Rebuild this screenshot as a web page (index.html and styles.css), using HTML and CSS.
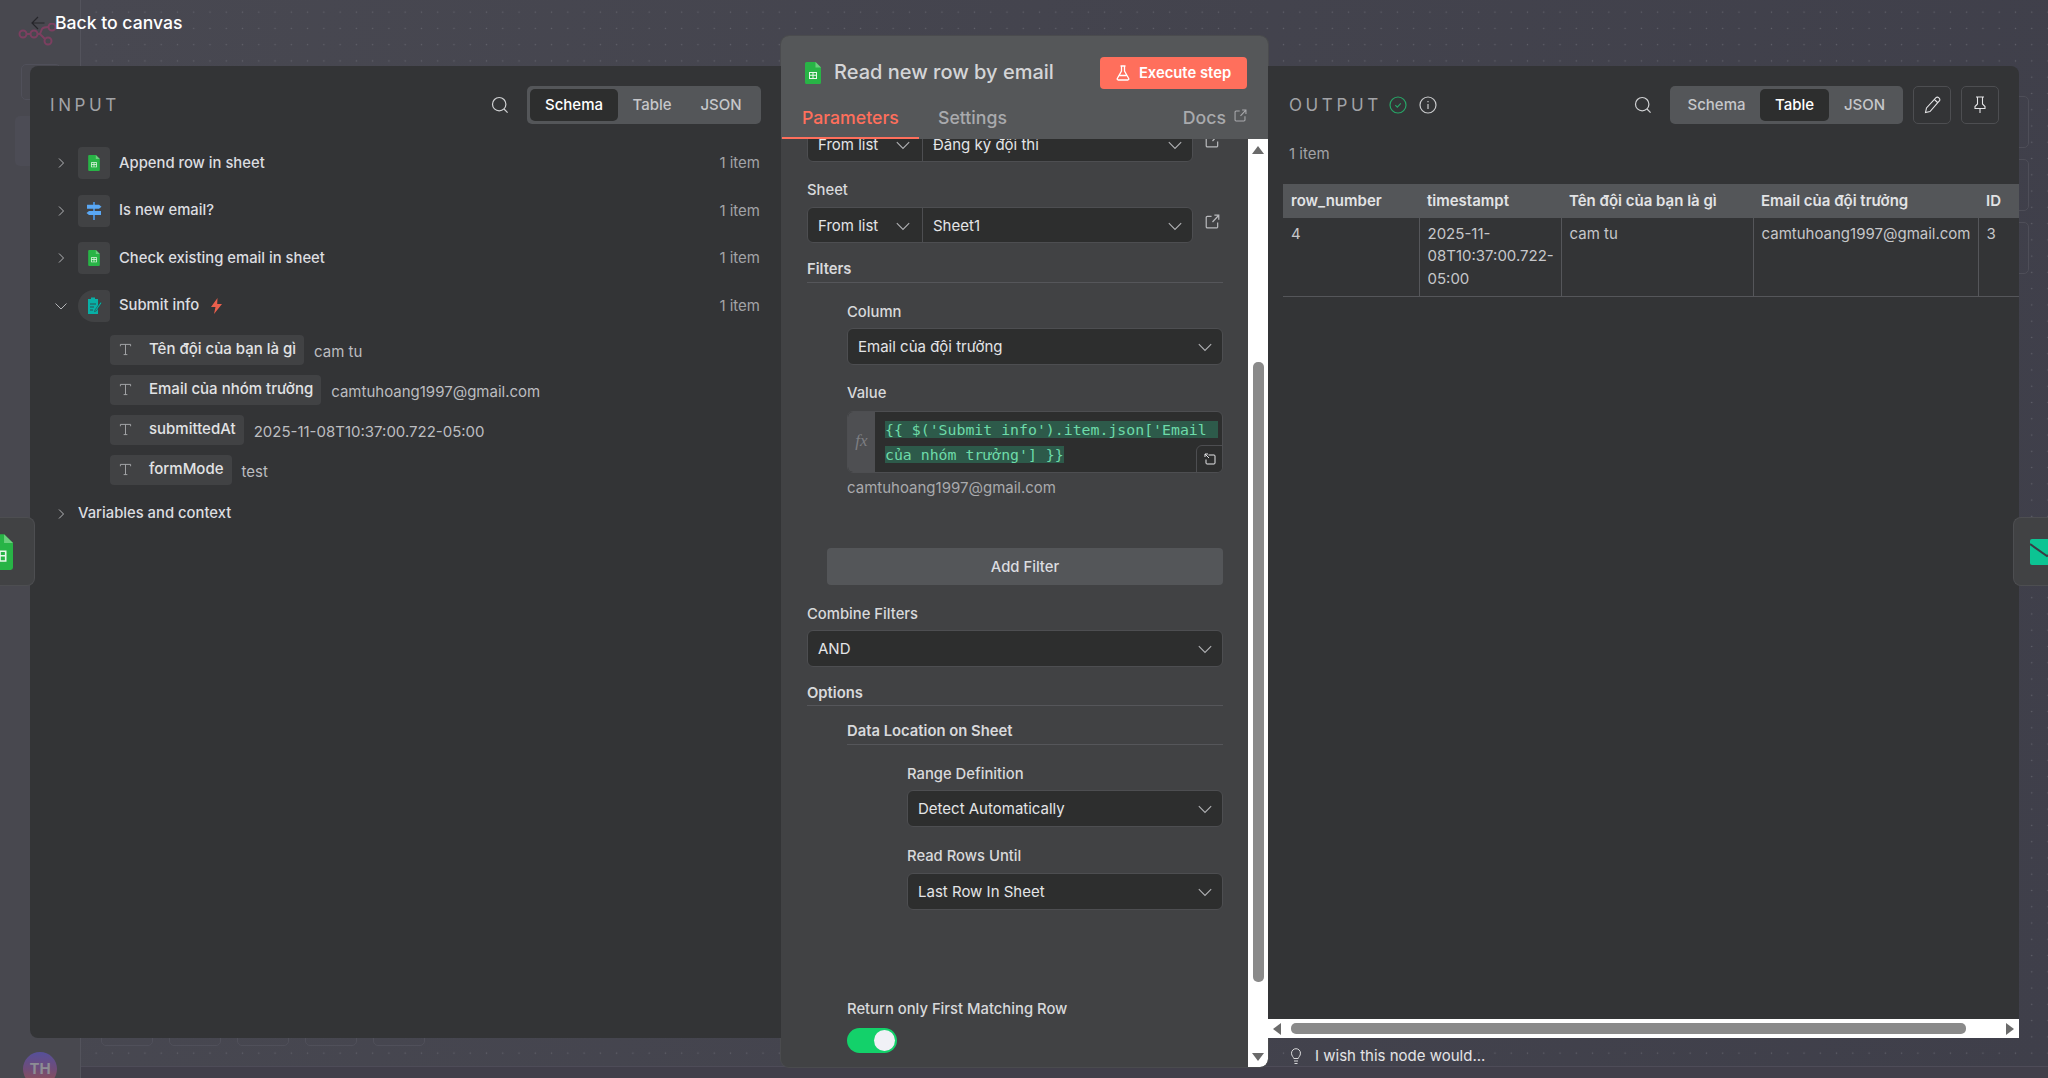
FILE: index.html
```html
<!DOCTYPE html>
<html lang="vi">
<head>
<meta charset="utf-8">
<title>Read new row by email</title>
<link rel="stylesheet" href="styles.css">
</head>
<body>
<svg class="defs" width="0" height="0">
  <symbol id="chev-r" viewBox="0 0 16 16"><path d="M6 3.500 10.500 8 6 12.500" fill="none" stroke="currentColor" stroke-width="1"/></symbol>
  <symbol id="chev-d" viewBox="0 0 16 16"><path d="M2.500 5.500 8 11l5.500-5.500" fill="none" stroke="currentColor" stroke-width="1"/></symbol>
  <symbol id="search" viewBox="0 0 20 20"><circle cx="9.200" cy="9.200" r="6.700" fill="none" stroke="currentColor" stroke-width="1.200"/><path d="m14 14 3.600 3.600" fill="none" stroke="currentColor" stroke-width="1.200"/></symbol>
  <symbol id="sheets" viewBox="0 0 16 22"><path d="M1.500 0H10.500L16 5.500V20.500A1.500 1.500 0 0 1 14.500 22H1.500A1.500 1.500 0 0 1 0 20.500V1.500A1.500 1.500 0 0 1 1.500 0Z" fill="#28b446"/><path d="M10.500 0 16 5.500H10.500Z" fill="#6ace7c"/><path d="M4 10h8v7H4Zm1 1v1.800h2.500V11Zm3.500 0v1.800H11V11ZM5 13.800v2.200h2.500v-2.200Zm3.500 0v2.200H11v-2.200Z" fill="#e8f8ea" fill-rule="evenodd"/></symbol>
  <symbol id="ext" viewBox="0 0 16 16"><path d="M7 2.500H2.500A1.200 1.200 0 0 0 1.300 3.700v9.800a1.200 1.200 0 0 0 1.200 1.200h9.800a1.200 1.200 0 0 0 1.200-1.200V9M8 8.500 14.700 1.300M10 1.300h4.700V6" fill="none" stroke="currentColor" stroke-width="1.300"/></symbol>
  <symbol id="type" viewBox="0 0 14 14"><path d="M1.500 3.500V1.500h11v2M7 1.500v11M5 12.500h4" fill="none" stroke="currentColor" stroke-width="1"/></symbol>
</svg>

<div class="app">
  <aside class="rail">
    <svg class="logo" width="40" height="24" viewBox="0 0 40 24" fill="none" stroke="#7c3f60" stroke-width="2"><circle cx="5" cy="11" r="3.500"/><circle cx="16" cy="11" r="3.500"/><circle cx="30" cy="18" r="3.500"/><circle cx="34" cy="4" r="3.500"/><path d="M8.500 11H12.500M19.500 11H22L27 16M22 11 24 6Q25.500 4 30.500 4"/></svg>
    <div class="rail-btn"></div>
    <div class="rail-fill"></div>
    <div class="avatar">TH</div>
  </aside>
  <div class="canvas">
    <div class="ghost-row">
      <div class="ghost-node"></div><div class="ghost-node"></div><div class="ghost-node"></div><div class="ghost-node"></div><div class="ghost-node"></div>
    </div>
    <div class="ghost-col">
      <div class="ghost-card"></div><div class="ghost-card"></div><div class="ghost-card"></div>
    </div>
  </div>

  <a class="back">
    <svg class="back-arrow" width="18" height="18" viewBox="0 0 18 18" fill="none" stroke="#26262b" stroke-width="1.200"><path d="M15.500 9H3M9 3 3 9l6 6"/></svg>
    <span>Back to canvas</span>
  </a>

  <div class="node-tab node-tab-left">
    <svg class="tab-sheet" width="26" height="36"><use href="#sheets"/></svg>
  </div>
  <div class="node-tab node-tab-right">
    <svg class="tab-mail" width="32" height="26" viewBox="0 0 32 26"><rect width="32" height="26" rx="2" fill="#0cc493"/><path d="M0 5 17 17 32 8" fill="none" stroke="#3a3b44" stroke-width="2"/></svg>
  </div>

  <main class="modal">
    <section class="panel panel-input">
      <header class="panel-head">
        <h2 class="panel-title">INPUT</h2>
        <div class="head-tools">
          <svg class="ico-search" width="20" height="20"><use href="#search"/></svg>
          <div class="switch switch-input">
            <span class="sw sw-on sw-schema">Schema</span><span class="sw sw-table">Table</span><span class="sw sw-json">JSON</span>
          </div>
        </div>
      </header>
      <div class="tree">
        <div class="node-row">
          <svg class="chev" width="16" height="16"><use href="#chev-r"/></svg>
          <span class="node-ico"><svg width="12" height="16"><use href="#sheets"/></svg></span>
          <span class="node-name">Append row in sheet</span><span class="count">1 item</span>
        </div>
        <div class="node-row">
          <svg class="chev" width="16" height="16"><use href="#chev-r"/></svg>
          <span class="node-ico"><svg width="16" height="18" viewBox="0 0 16 18"><path d="M7.200 0h1.600v18H7.200Z" fill="#4a9cf0"/><path d="M1 2.800h12l2.500 2-2.500 2H1Z" fill="#5aa8f5"/><path d="M15 9H3L.5 11 3 13h12Z" fill="#5aa8f5"/></svg></span>
          <span class="node-name">Is new email?</span><span class="count">1 item</span>
        </div>
        <div class="node-row">
          <svg class="chev" width="16" height="16"><use href="#chev-r"/></svg>
          <span class="node-ico"><svg width="12" height="16"><use href="#sheets"/></svg></span>
          <span class="node-name">Check existing email in sheet</span><span class="count">1 item</span>
        </div>
        <div class="node-row">
          <svg class="chev" width="16" height="16"><use href="#chev-d"/></svg>
          <span class="node-ico node-ico-trigger"><svg width="15" height="17" viewBox="0 0 15 17"><path d="M1 2h3V.5h4V2h3v15H1Z" fill="#08b0a6"/><path d="M3 7h6M3 10h4M3 13h3" stroke="#2f4f52" stroke-width="1.200"/><path d="m8 13 5.500-8 1.300 1-5.500 8-1.800.6Z" fill="#08b0a6" stroke="#333436" stroke-width=".5"/></svg></span>
          <span class="node-name">Submit info</span>
          <svg class="bolt" width="11" height="16" viewBox="0 0 11 16"><path d="M6.500 0 0 9h4.500L3 16l8-10H6.200Z" fill="#ea5f4c"/></svg>
          <span class="count">1 item</span>
        </div>
        <div class="fields">
          <div class="field-row"><span class="pill"><svg class="t-ico" width="13" height="13"><use href="#type"/></svg>Tên đội của bạn là gì</span><span class="val">cam tu</span></div>
          <div class="field-row"><span class="pill"><svg class="t-ico" width="13" height="13"><use href="#type"/></svg>Email của nhóm trưởng</span><span class="val">camtuhoang1997@gmail.com</span></div>
          <div class="field-row"><span class="pill"><svg class="t-ico" width="13" height="13"><use href="#type"/></svg>submittedAt</span><span class="val">2025-11-08T10:37:00.722-05:00</span></div>
          <div class="field-row"><span class="pill"><svg class="t-ico" width="13" height="13"><use href="#type"/></svg>formMode</span><span class="val">test</span></div>
        </div>
        <div class="vars">
          <svg class="chev" width="16" height="16"><use href="#chev-r"/></svg>
          <span class="node-name">Variables and context</span>
        </div>
      </div>
    </section>

    <section class="panel-main">
      <header class="main-head">
        <div class="main-title-row">
          <svg class="main-ico" width="16" height="22"><use href="#sheets"/></svg>
          <h1 class="main-title">Read new row by email</h1>
          <button class="exec">
            <svg width="14" height="16" viewBox="0 0 14 16" fill="none" stroke="#fff" stroke-width="1.300"><path d="M4.500 1h5M5.500 1v5L1.300 13.500A1 1 0 0 0 2.200 15h9.600a1 1 0 0 0 .9-1.500L8.500 6V1M3.500 10.500h7"/></svg>
            Execute step
          </button>
        </div>
        <nav class="tabs">
          <span class="tab tab-on">Parameters</span>
          <span class="tab tab-settings">Settings</span>
          <span class="docs">Docs <svg width="13" height="13"><use href="#ext"/></svg></span>
        </nav>
      </header>
      <div class="main-body">
        <div class="form">
          <div class="loc-row loc-first">
            <div class="loc">
              <span class="loc-mode">From list<svg width="18" height="18"><use href="#chev-d"/></svg></span>
              <span class="loc-val">Đăng ký đội thi<svg width="18" height="18"><use href="#chev-d"/></svg></span>
            </div>
            <svg class="ext" width="15" height="15"><use href="#ext"/></svg>
          </div>

          <label class="label label-sheet mt-18">Sheet</label>
          <div class="loc-row loc-sheet">
            <div class="loc">
              <span class="loc-mode">From list<svg width="18" height="18"><use href="#chev-d"/></svg></span>
              <span class="loc-val">Sheet1<svg width="18" height="18"><use href="#chev-d"/></svg></span>
            </div>
            <svg class="ext" width="15" height="15"><use href="#ext"/></svg>
          </div>

          <div class="section mt-16">Filters</div>
          <div class="indent-1">
            <label class="label mt-19">Column</label>
            <div class="select">Email của đội trưởng<svg width="18" height="18"><use href="#chev-d"/></svg></div>

            <label class="label mt-18 label-value">Value</label>
            <div class="expr">
              <span class="fx">fx</span>
              <div class="code"><span class="hl hl-first">{{ $('Submit info').item.json['Email </span><br><span class="hl">của nhóm trưởng'] }}</span></div>
              <span class="expand"><svg width="12" height="12" viewBox="0 0 12 12" fill="none" stroke="#e6e6e8" stroke-width="1"><path d="M1 4V1h3M1 1l4 4M4.500 2H10a1 1 0 0 1 1 1v7a1 1 0 0 1-1 1H3a1 1 0 0 1-1-1V6.500"/></svg></span>
            </div>
            <div class="hint">camtuhoang1997@gmail.com</div>
          </div>
          <button class="add-filter">Add Filter</button>

          <label class="label mt-19">Combine Filters</label>
          <div class="select">AND<svg width="18" height="18"><use href="#chev-d"/></svg></div>

          <div class="section section-options">Options</div>
          <div class="indent-1">
            <div class="section section-data">Data Location on Sheet</div>
            <div class="indent-2">
              <label class="label mt-19">Range Definition</label>
              <div class="select">Detect Automatically<svg width="18" height="18"><use href="#chev-d"/></svg></div>
              <label class="label mt-19 label-read">Read Rows Until</label>
              <div class="select">Last Row In Sheet<svg width="18" height="18"><use href="#chev-d"/></svg></div>
            </div>
            <label class="label label-return">Return only First Matching Row</label>
            <div class="toggle"><span class="knob"></span></div>
          </div>
        </div>
        <div class="vscroll">
          <span class="arrow arrow-up"></span>
          <span class="v-gap-top"></span>
          <span class="v-thumb"></span>
          <span class="v-gap-bot"></span>
          <span class="arrow arrow-down"></span>
        </div>
      </div>
    </section>

    <div class="output-col">
      <section class="panel panel-output">
        <header class="panel-head">
          <div class="out-title">
            <h2 class="panel-title">OUTPUT</h2>
            <svg class="ok" width="18" height="18" viewBox="0 0 18 18" fill="none"><circle cx="9" cy="9" r="8" stroke="#27a567" stroke-width="1.200"/><path d="m6.300 9.200 2 2 3.500-3.800" stroke="#27a567" stroke-width="1.100"/></svg>
            <svg class="info" width="18" height="18" viewBox="0 0 18 18" fill="none" stroke="#c9cacc" stroke-width="1.200"><circle cx="9" cy="9" r="8"/><path d="M9 8v5M9 5v1.300"/></svg>
          </div>
          <div class="head-tools head-tools-out">
            <svg class="ico-search" width="20" height="20"><use href="#search"/></svg>
            <div class="switch switch-output">
              <span class="sw sw-schema-o">Schema</span><span class="sw sw-on sw-table-o">Table</span><span class="sw sw-json-o">JSON</span>
            </div>
            <span class="tool-btn"><svg width="17" height="18" viewBox="0 0 17 18" fill="none" stroke="#e4e4e6" stroke-width="1.100"><path d="m1.500 16.500 1-4.500L12 1.700a1.800 1.800 0 0 1 2.600 0l.7.700a1.800 1.800 0 0 1 0 2.600L6 15.500ZM10.500 3.500l3 3"/></svg></span>
            <span class="tool-btn"><svg width="14" height="18" viewBox="0 0 14 18" fill="none" stroke="#e4e4e6" stroke-width="1.100"><path d="M3 1h8M4.500 1v7L2 10.500V12.500h10v-2L9.500 8V1M7 12.500V17"/></svg></span>
          </div>
        </header>
        <div class="items">1 item</div>
        <table class="table">
          <thead>
            <tr><th class="c1">row_number</th><th class="c2">timestampt</th><th class="c3">Tên đội của bạn là gì</th><th class="c4">Email của đội trưởng</th><th class="c5">ID</th></tr>
          </thead>
          <tbody>
            <tr><td>4</td><td>2025-11-08T10:37:00.722-05:00</td><td>cam tu</td><td>camtuhoang1997@gmail.com</td><td>3</td></tr>
          </tbody>
        </table>
        <div class="hscroll">
          <span class="arrow arrow-left"></span>
          <span class="h-thumb"></span>
          <span class="arrow arrow-right"></span>
        </div>
      </section>
      <div class="wish">
        <svg width="12" height="17" viewBox="0 0 12 17" fill="none" stroke="#d8d8da" stroke-width="1"><path d="M3.800 10.500C3.500 9 1.500 8 1.500 5.200a4.500 4.500 0 0 1 9 0C10.500 8 8.500 9 8.200 10.500ZM4 13h4M4.500 15.500h3"/></svg>
        <span>I wish this node would...</span>
      </div>
    </div>
  </main>
</div>
</body>
</html>
```
FILE: styles.css
```css
* { box-sizing: border-box; }
html, body { margin: 0; padding: 0; }
body {
  width: 2048px;
  height: 1078px;
  overflow: hidden;
  background: #45454e;
  font-family: Inter, "Noto Sans", sans-serif;
  font-size: 15px;
  color: #d6d7d9;
}
h1, h2 { margin: 0; }
button { font-family: inherit; border: 0; padding: 0; }
.defs { position: absolute; }

.app {
  position: relative;
  display: flex;
  width: 2048px;
  height: 1078px;
  overflow: hidden;
}

/* dimmed editor behind the modal */
.rail {
  position: relative;
  flex: 0 0 81px;
  background: #48484f;
  border-right: 1px solid #53535c;
}
.logo { position: absolute; left: 18px; top: 23px; }
.rail-btn {
  position: absolute; left: 21px; top: 64px; width: 40px; height: 36px;
  border: 1px solid #50505a; border-radius: 5px;
}
.rail-fill {
  position: absolute; left: 15px; top: 116px; width: 60px; height: 50px;
  background: #4c4c55; border-radius: 5px;
}
.avatar {
  position: absolute; left: 23px; top: 1052px; width: 34px; height: 34px; border-radius: 50%;
  background: linear-gradient(180deg, #56509a 0%, #6f4c78 50%, #96524e 100%);
  color: #8d8d94; font-size: 15px; font-weight: 700; line-height: 34px; text-align: center;
}
.canvas {
  position: relative;
  flex: 1;
  background-color: #44444d;
  background-image:
    radial-gradient(circle, #63636c 0.7px, transparent 1px),
    linear-gradient(100deg, #484851 0%, #3f3f4a 100%);
  background-size: 16.270px 16.270px, 100% 100%;
  background-position: 7px 4px, 0 0;
}
.canvas::after {
  content: ""; position: absolute; left: 0; right: 0; top: 1066px; bottom: 0;
  background: #413f4a; border-top: 1px solid #4e4c58;
}
.ghost-row { position: absolute; left: 20px; top: 1020px; display: flex; gap: 16px; }
.ghost-node { width: 52px; height: 26px; border: 1px solid #50505a; border-radius: 5px; }
.ghost-col { position: absolute; right: 19px; top: 96px; display: flex; flex-direction: column; gap: 11px; }
.ghost-card { width: 40px; height: 52px; border: 1px solid #4e4e58; border-radius: 5px; }

.back {
  position: absolute; left: 29px; top: 14px; z-index: 5;
  display: flex; align-items: center; gap: 8px;
  color: #fff; font-size: 17.600px; font-weight: 500; line-height: 18px;
}

.node-tab {
  position: absolute; top: 517px; width: 35px; height: 69px; z-index: 1;
  background: #414244; border: 1px solid #4d4e51; overflow: hidden;
}
.node-tab-left { left: 0; z-index: 3; border-radius: 0 8px 8px 0; border-left: 0; }
.node-tab-right { right: 0; z-index: 3; border-radius: 8px 0 0 8px; border-right: 0; }
.tab-sheet { position: absolute; right: 21px; top: 16px; }
.tab-mail { position: absolute; left: 16px; top: 21px; }

/* modal */
.modal {
  position: absolute; left: 30px; top: 36px; width: 1989px; height: 1031px;
  display: flex; z-index: 2;
}
.panel {
  position: relative;
  background: #333436;
}
.panel-input {
  width: 751px; height: 972px; margin-top: 30px;
  border-radius: 8px 0 0 8px;
}
.panel-head {
  display: flex; align-items: center; justify-content: space-between;
  height: 38px; margin-top: 20px;
}
.panel-input .panel-head { padding: 0 20px; }
.panel-title {
  font-size: 17px; font-weight: 400; letter-spacing: 3.600px; color: #a2a3a7; line-height: 20px;
}
.head-tools { display: flex; align-items: center; gap: 17px; }
.ico-search { color: #d0d1d3; }
.switch {
  display: flex; align-items: center; height: 38px; padding: 3px; background: #545659; border-radius: 5px;
}
.switch-input { width: 234px; }
.switch-output { width: 233px; margin-right: -7px; }
.sw {
  height: 32px; line-height: 32px; text-align: center; border-radius: 5px;
  font-size: 15px; font-weight: 500; color: #c6c7ca;
}
.sw-on { background: #2d2e2e; color: #fff; }
.sw-schema { width: 88px; }
.sw-table { width: 68px; }
.sw-json { width: 70px; }
.sw-schema-o { width: 87px; }
.sw-table-o { width: 69px; }
.sw-json-o { width: 71px; }

.tree { padding: 23px 21px 0 23px; }
.node-row { display: flex; align-items: center; height: 32px; margin-bottom: 15.500px; }
.chev { flex: 0 0 16px; color: #b4b5b8; margin-right: 9px; }
.node-ico {
  flex: 0 0 32px; height: 32px; margin-right: 9px; background: #414244; border-radius: 4px;
  display: flex; align-items: center; justify-content: center;
}
.node-ico-trigger { border-radius: 16px 4px 4px 16px; }
.node-name { font-size: 14.800px; font-weight: 500; color: #dcdde0; margin-top: -1px; }
.bolt { margin-left: 12px; }
.count { margin-left: auto; color: #a2a3a7; font-size: 15px; margin-top: -1px; }
.fields { display: flex; flex-direction: column; gap: 10px; margin: -2.500px 0 0 57px; }
.field-row { display: flex; align-items: flex-start; gap: 10px; }
.pill {
  display: inline-flex; align-items: center; height: 30px; padding: 0 8px 3px 9px;
  background: #414244; border-radius: 4px; color: #e2e3e5; font-size: 15px; font-weight: 500;
}
.t-ico { color: #a8a9ac; margin: 3px 17px 0 0; }
.val { line-height: 20px; margin-top: 7px; color: #bcbdc0; font-size: 15px; }
.vars { display: flex; align-items: center; height: 20px; margin-top: 19px; }

/* center */
.panel-main {
  flex: 0 0 487px; height: 1031px; display: flex; flex-direction: column;
  background: #414244; border-radius: 8px; overflow: hidden;
  box-shadow: 0 0 0 1px #4a4b4e;
}
.main-head { flex: 0 0 103px; background: #555759; }
.main-title-row { display: flex; align-items: center; height: 32px; margin-top: 21px; padding: 0 21px 0 24px; }
.main-ico { margin-right: 13px; }
.main-title { flex: 1; font-size: 20px; font-weight: 500; color: #d4d5d7; margin-top: -2px; }
.exec {
  display: flex; align-items: center; justify-content: center; gap: 9px;
  width: 147px; height: 32px; border-radius: 4px; background: #ff6f5c; color: #fff;
  font-size: 14.800px; font-weight: 600;
}
.tabs { display: flex; align-items: flex-start; height: 50px; margin-top: 0; padding-left: 1px; }
.tab { font-size: 17.700px; font-weight: 500; line-height: 24px; padding: 17px 20px 0; }
.tab-on { height: 50px; width: 137px; color: #ff6f5c; border-bottom: 2px solid #ff6f5c; }
.tab-settings { color: #a9aaad; padding-left: 19px; }
.docs {
  margin-left: auto; padding: 17px 21px 0 0; font-size: 17.700px; font-weight: 500; line-height: 24px; color: #a9aaad;
  display: flex; gap: 8px;
}
.docs svg { margin-top: 3px; }

.main-body { flex: 1; display: flex; min-height: 0; }
.form { flex: 0 0 467px; padding: 0 25px 0 26px; overflow: hidden; }
.label {
  display: block; height: 20px; line-height: 20px; margin-bottom: 6px;
  font-size: 14.800px; font-weight: 500; color: #d8d9db;
}
.label-sheet, .label-read { margin-bottom: 7px; }
.mt-16 { margin-top: 16px; }
.mt-18 { margin-top: 18px; }
.mt-19 { margin-top: 19px; }
.loc-row { display: flex; gap: 12px; width: 416px; }
.loc-first { margin-top: -13px; }
.loc {
  display: flex; flex: 0 0 386px; height: 36px;
  background: #2d2e2e; border: 1px solid #4d4e51; border-radius: 6px;
  color: #e4e5e7; font-size: 15px; line-height: 34px;
}
.loc-mode {
  flex: 0 0 115px; display: flex; align-items: center; justify-content: space-between;
  padding: 1px 10px 0 10px; border-right: 1px solid #4d4e51;
}
.loc-val { flex: 1; display: flex; align-items: center; justify-content: space-between; padding: 1px 8px 0 10px; }
.loc svg, .select svg { color: #b0b1b4; }
.ext { color: #b8b9bc; margin-top: 7px; }
.section {
  height: 24px; line-height: 20px; border-bottom: 1px solid #55565a;
  font-size: 14.800px; font-weight: 600; color: #d8d9db;
}
.indent-1 { padding-left: 40px; }
.indent-2 { padding-left: 60px; }
.select {
  display: flex; align-items: center; justify-content: space-between;
  height: 37px; padding: 0 8px 0 10px;
  background: #2d2e2e; border: 1px solid #4d4e51; border-radius: 6px;
  color: #e4e5e7; font-size: 15px;
}
.label-value { margin-bottom: 8px; }
.expr {
  position: relative; display: flex; height: 62px;
  background: #2d2e2e; border: 1px solid #4d4e51; border-radius: 6px; overflow: hidden;
}
.fx {
  flex: 0 0 27px; background: #4e4f52; color: #7d7e82;
  font-family: "Liberation Serif", serif; font-style: italic; font-size: 17px; line-height: 58px; text-align: center;
}
.code {
  padding: 9px 0 0 10px; font-family: "DejaVu Sans Mono", monospace; font-size: 14.850px; line-height: 25px; color: #6ddba9; white-space: pre;
}
.hl { background: #2d5a4a; display: inline-block; height: 17px; line-height: 18px; vertical-align: top; margin-bottom: 8px; }
.hl-first { width: 333px; }
.expand {
  position: absolute; right: -1px; bottom: -1px; width: 27px; height: 28px;
  display: flex; align-items: center; justify-content: center;
  background: #2d2e2e; border: 1px solid #4d4e51; border-radius: 6px 0 0 0;
}
.hint { margin-top: 5px; line-height: 20px; color: #a9aaad; font-size: 15px; }
.add-filter {
  display: block; width: 396px; height: 37px; margin: 50px 0 0 20px;
  background: #545659; border-radius: 4px; color: #dcdde0; font-size: 14.800px; font-weight: 500;
}
.section-options { height: 23px; margin-top: 16px; }
.section-data { margin-top: 15px; }
.label-return { margin: 89px 0 9px; }
.toggle { position: relative; width: 50px; height: 25px; border-radius: 13px; background: #13d16a; }
.knob { position: absolute; right: 2px; top: 2px; width: 21px; height: 21px; border-radius: 50%; background: #f0f1f6; }

.vscroll {
  flex: 0 0 20px; display: flex; flex-direction: column; align-items: center;
  background: #fff; border-radius: 0 0 8px 0;
}
.arrow { display: block; width: 0; height: 0; flex: none; }
.arrow-up { margin-top: 7px; border: 6px solid transparent; border-top: 0; border-bottom: 8px solid #6a6a6a; }
.arrow-down { margin-bottom: 6px; border: 6px solid transparent; border-bottom: 0; border-top: 8px solid #6a6a6a; }
.v-gap-top { flex: 0 0 208px; }
.v-thumb { flex: 0 0 620px; width: 11px; background: #8a8a8a; border-radius: 5px; }
.v-gap-bot { flex: 1; }

/* output */
.output-col { flex: 1; display: flex; flex-direction: column; }
.panel-output {
  display: flex; flex-direction: column;
  height: 972px; margin-top: 30px; border-radius: 0 8px 0 0; overflow: hidden;
}
.panel-output .panel-head { padding: 0 20px 0 21px; flex: none; }
.out-title { display: flex; align-items: center; }
.ok { margin-left: 7px; }
.info { margin-left: 12px; }
.head-tools-out { gap: 17px; }
.tool-btn {
  width: 38px; height: 38px; border: 1px solid #4d4e51; border-radius: 5px;
  display: flex; align-items: center; justify-content: center; flex: none;
}
.head-tools-out .tool-btn + .tool-btn { margin-left: -7px; }
.items { margin: 20px 0 0 21px; line-height: 20px; color: #a2a3a7; flex: none; }
.table {
  flex: none; width: 736px; margin: 20px 0 0 15px;
  border-collapse: collapse; table-layout: fixed; font-size: 15px;
}
.c1 { width: 136px; }
.c2 { width: 142px; }
.c3 { width: 192px; }
.c4 { width: 225px; }
.c5 { width: 41px; }
.table th {
  height: 34px; padding: 0 8px 2px; background: #545659; text-align: left; font-weight: 600; color: #e2e3e5; white-space: nowrap;
}
.table td {
  padding: 5px 3px 6px 8px; vertical-align: top; line-height: 22.300px; color: #c6c7ca;
  border-bottom: 1px solid #55565a; border-left: 1px solid #55565a; overflow-wrap: anywhere;
}
.table td:first-child { border-left: 0; }
.hscroll {
  display: flex; align-items: center; margin-top: auto; height: 19px; padding: 0 5px;
  background: #fff; flex: none;
}
.arrow-left { border: 6px solid transparent; border-left: 0; border-right: 8px solid #6a6a6a; }
.arrow-right { margin-left: auto; border: 6px solid transparent; border-right: 0; border-left: 8px solid #6a6a6a; }
.h-thumb { width: 675px; height: 11px; margin-left: 10px; border-radius: 5px; background: #8a8a8a; }
.wish {
  display: flex; align-items: center; gap: 13px; padding: 8px 0 0 22px;
  font-size: 15px; color: #e4e4e6; line-height: 20px;
}
```
